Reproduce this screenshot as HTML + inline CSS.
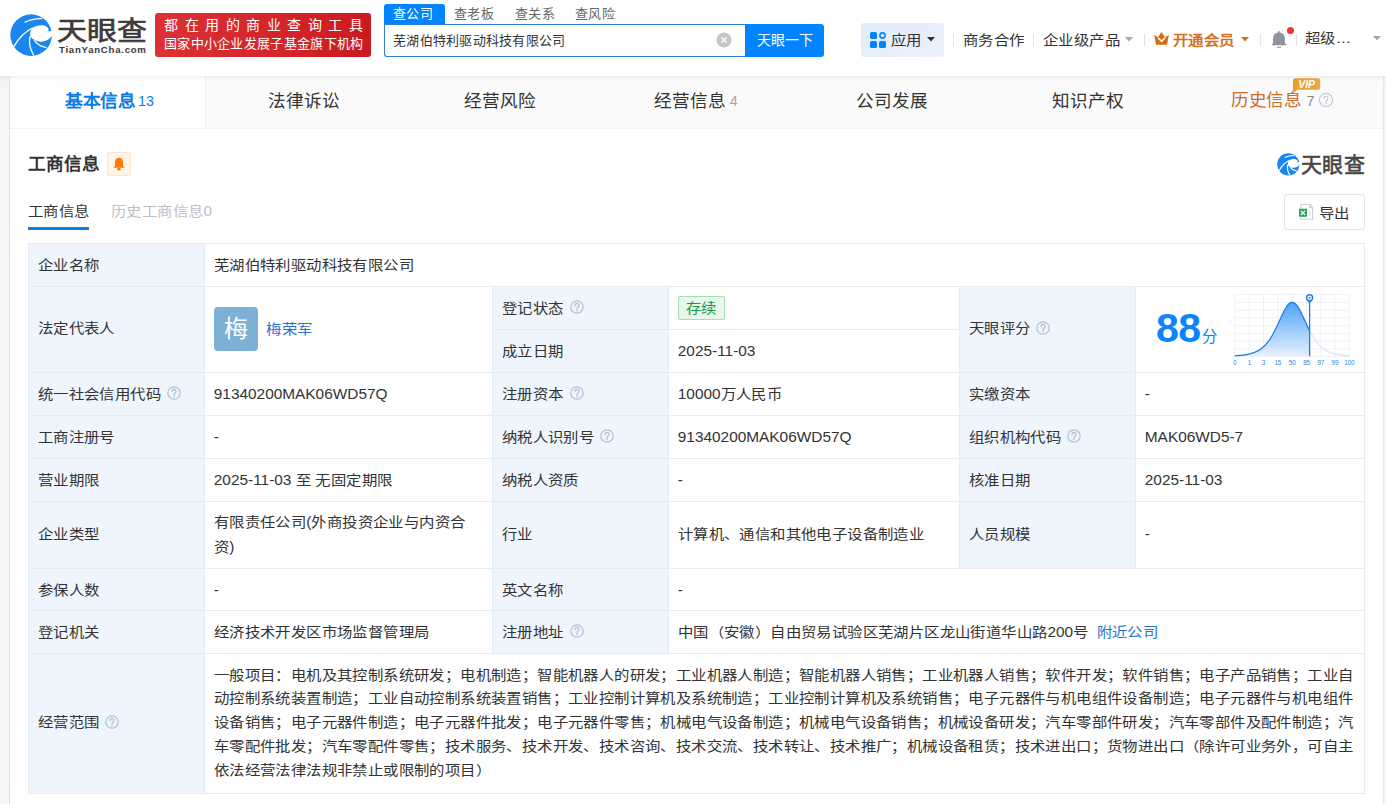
<!DOCTYPE html>
<html lang="zh-CN"><head><meta charset="utf-8">
<style>
*{margin:0;padding:0;box-sizing:border-box}
html,body{text-spacing-trim:space-all;width:1386px;height:804px;overflow:hidden;background:#f5f5f5;font-family:"Liberation Sans",sans-serif;color:#333}
.abs{position:absolute}
.hdr{position:absolute;left:0;top:0;width:1386px;height:76px;background:#fff;z-index:3;box-shadow:0 1px 5px rgba(0,0,0,.09)}
.card{position:absolute;left:9px;top:76px;width:1375px;height:728px;background:#fff;border-left:1px solid #e6e6e6;border-right:1px solid #e6e6e6}
.tabs{position:absolute;left:10px;top:76px;width:1373px;height:53px;background:#fafafa;border-bottom:1px solid #f3f3f3}
.tab{position:absolute;top:0;height:52px;width:196px;text-align:center;font-size:17.6px;line-height:50px;color:#333;white-space:nowrap}
.tab.act{background:#fff;color:#0a7de8;font-weight:bold;border-right:1px solid #efefef}
.tab sup{font-size:14.3px;font-weight:normal;vertical-align:1px;margin-left:3.5px;color:#888}
.tbl{position:absolute;background:#e4ebf3}
.cell{position:absolute;display:flex;align-items:center;padding:0 8.8px;font-size:15.4px;line-height:23.9px;color:#333;white-space:nowrap}
.cell .ml{white-space:nowrap;position:relative}
.cell .c{display:inline-block;transform:translateY(.8px) scaleY(.87)}
.c{letter-spacing:.4px}
.k{display:inline-block;transform:translateY(.8px) scaleY(.87)}
.qi{position:absolute;z-index:2}
.avatar{width:44px;height:44px;border-radius:4px;background:#7db0d7;color:#fff;font-size:24px;line-height:44px;text-align:center}
.lnk{color:#1f73cf;text-decoration:none}
.tag{display:inline-block;height:24px;line-height:22px;padding:0 7px;border:1px solid #a6dcb4;background:#e8f7ec;color:#1d9a45;border-radius:2px;font-size:15.4px}
</style></head><body>
<div class="hdr">
  <!-- logo -->
  <svg class="abs" style="left:8px;top:12px" width="46" height="46" viewBox="0 0 46 46">
    <circle cx="23.1" cy="23.1" r="20.8" fill="#1a86f0"/>
    <path d="M24.6 16 C28 13.2 36 12 39.6 15.4 C41.2 17 40.6 18.8 39.5 19.6 L45 18.8 L45 22 C42.5 27.5 37 30 31.5 29.6 C28 29.3 25 27.5 22.6 25 C21.4 22 22.4 18.2 24.6 16 Z" fill="#fff"/>
    <path d="M16.6 10.4 Q25 6.2 34.2 6.6" stroke="#fff" stroke-width="1.3" fill="none"/>
    <path d="M5.8 34.6 C10 27.5 16 20 24.8 15.9" stroke="#fff" stroke-width="1.3" fill="none"/>
    <path d="M22 24.2 C20.8 30 22.5 38 25.8 43.5" stroke="#fff" stroke-width="1.3" fill="none"/>
    <path d="M26.3 28.4 C28.5 31.6 33 34.6 38.6 35.6" stroke="#fff" stroke-width="1.2" fill="none"/>
  </svg>
  <div class="abs" style="left:57px;top:16px;font-size:26px;line-height:30px;font-weight:normal;-webkit-text-stroke:.7px #3e3a39;color:#3e3a39;transform:scaleX(1.15);transform-origin:0 0;white-space:nowrap">天眼查</div>
  <div class="abs" style="left:59px;top:44px;font-size:9.6px;line-height:12px;font-weight:bold;color:#3e3a39;letter-spacing:0.75px">TianYanCha.com</div>
  <!-- red banner -->
  <div class="abs" style="left:155px;top:13px;width:216px;height:44px;border-radius:3px;background:linear-gradient(90deg,#dd3136,#cb1b21)"></div>
  <div class="abs" style="left:164px;top:16px;width:199px;font-size:14px;line-height:18px;color:#fff;text-align:justify;text-align-last:justify;white-space:nowrap">都在用的商业查询工具</div>
  <div class="abs" style="left:164px;top:35px;font-size:13px;letter-spacing:.3px;line-height:18px;color:#fff;white-space:nowrap">国家中小企业发展子基金旗下机构</div>
  <!-- search -->
  <div class="abs" style="left:384px;top:4px;width:61px;height:21px;background:#0084ff;border-radius:3px 3px 0 0"></div>
  <div class="abs" style="left:393px;top:4px;font-size:13px;letter-spacing:.4px;line-height:20px;color:#fff">查公司</div>
  <div class="abs" style="left:454px;top:4px;font-size:13px;letter-spacing:.4px;line-height:20px;color:#666">查老板</div>
  <div class="abs" style="left:515px;top:4px;font-size:13px;letter-spacing:.4px;line-height:20px;color:#666">查关系</div>
  <div class="abs" style="left:575px;top:4px;font-size:13px;letter-spacing:.4px;line-height:20px;color:#666">查风险</div>
  <div class="abs" style="left:384px;top:24px;width:362px;height:33px;border:1px solid #2f7fd2;border-right:none;border-radius:0 0 0 3px;background:#fff"></div>
  <div class="abs" style="left:393px;top:30px;font-size:13px;letter-spacing:.25px;line-height:22px;color:#333">芜湖伯特利驱动科技有限公司</div>
  <svg class="abs" style="left:716px;top:32px" width="16" height="16" viewBox="0 0 16 16"><circle cx="8" cy="8" r="7.6" fill="#c4c6ca"/><path d="M5.3 5.3l5.4 5.4M10.7 5.3l-5.4 5.4" stroke="#fff" stroke-width="1.3"/></svg>
  <div class="abs" style="left:745px;top:24px;width:79px;height:33px;background:#0084ff;border-radius:0 3px 3px 0"></div>
  <div class="abs" style="left:757px;top:29px;font-size:14px;line-height:22px;color:#fff">天眼一下</div>
  <!-- right nav -->
  <div class="abs" style="left:861px;top:23px;width:83px;height:34px;background:linear-gradient(160deg,#e1ecfb 0%,#e6effb 55%,#ecf2fc 100%);border-radius:3px"></div>
  <svg class="abs" style="left:870px;top:32px" width="16" height="16" viewBox="0 0 16 16"><rect x="0" y="0" width="7" height="7" rx="1.5" fill="#0084ff"/><circle cx="12.5" cy="3.5" r="2.6" fill="none" stroke="#0084ff" stroke-width="1.6"/><rect x="0" y="9" width="7" height="7" rx="1.5" fill="#0084ff"/><rect x="9" y="9" width="7" height="7" rx="1.5" fill="#0084ff"/></svg>
  <div class="abs" style="left:891px;top:29px;font-size:15.4px;letter-spacing:.4px;line-height:22px;color:#333"><span class="k">应用</span></div>
  <svg class="abs" style="left:927px;top:37px" width="8" height="5" viewBox="0 0 8 5"><path d="M0 0h8L4 4.5z" fill="#333"/></svg>
  <div class="abs" style="left:953px;top:34px;width:1px;height:12px;background:#e3e3e3"></div>
  <div class="abs" style="left:963px;top:29px;font-size:15.4px;letter-spacing:.4px;line-height:22px;color:#333"><span class="k">商务合作</span></div>
  <div class="abs" style="left:1033px;top:34px;width:1px;height:12px;background:#e3e3e3"></div>
  <div class="abs" style="left:1043px;top:29px;font-size:15.4px;letter-spacing:.4px;line-height:22px;color:#333"><span class="k">企业级产品</span></div>
  <svg class="abs" style="left:1125px;top:37px" width="8" height="5" viewBox="0 0 8 5"><path d="M0 0h8L4 4.5z" fill="#a8a8a8"/></svg>
  <div class="abs" style="left:1144px;top:34px;width:1px;height:12px;background:#e3e3e3"></div>
  <svg class="abs" style="left:1154px;top:32px" width="15" height="13" viewBox="0 0 15 13"><path d="M0.2 3L4 5.2 7.4 0 11 5.2 14.9 3 13 12.7H2z" fill="#d96c12"/><path d="M4.1 5.8l3.5 3.5 3.6-3.5" stroke="#fff" stroke-width="1.6" fill="none"/></svg>
  <div class="abs" style="left:1173px;top:29px;font-size:15.4px;letter-spacing:.4px;line-height:22px;color:#d4701c;font-weight:bold"><span class="k">开通会员</span></div>
  <svg class="abs" style="left:1241px;top:37px" width="8" height="5" viewBox="0 0 8 5"><path d="M0 0h8L4 4.5z" fill="#d4701c"/></svg>
  <div class="abs" style="left:1260px;top:34px;width:1px;height:12px;background:#e3e3e3"></div>
  <svg class="abs" style="left:1271px;top:30px" width="16" height="19" viewBox="0 0 16 19"><rect x="7.2" y="1" width="1.6" height="2.5" rx=".8" fill="#8f949b"/><path d="M8 2.6c3.4 0 5.9 2.3 5.9 6V14H2.1V8.6C2.1 4.9 4.6 2.6 8 2.6z" fill="#8f949b"/><rect x="0.8" y="13.8" width="14.6" height="1.4" rx=".7" fill="#8f949b"/><rect x="6" y="16.8" width="4.2" height="1" fill="#8f949b"/></svg>
  <div class="abs" style="left:1287px;top:27px;width:7.4px;height:7.4px;border-radius:50%;background:#f5332e"></div>
  <div class="abs" style="left:1296px;top:34px;width:1px;height:12px;background:#e3e3e3"></div>
  <div class="abs" style="left:1305px;top:27px;font-size:15.4px;letter-spacing:.4px;line-height:22px;color:#333"><span class="k">超级</span>…</div>
  <svg class="abs" style="left:1373px;top:36px" width="8" height="5" viewBox="0 0 8 5"><path d="M0 0h8L4 4.5z" fill="#a8a8a8"/></svg>
</div>

<div class="card"></div>
<div class="tabs">
  <div class="tab act" style="left:0;padding-left:4px"><span style="letter-spacing:-.4px">基本信息</span><sup style="color:#0a7de8;margin-left:2.5px">13</sup></div>
  <div class="tab" style="left:196px">法律诉讼</div>
  <div class="tab" style="left:392px">经营风险</div>
  <div class="tab" style="left:588px">经营信息<sup style="color:#a6a6a6">4</sup></div>
  <div class="tab" style="left:784px">公司发展</div>
  <div class="tab" style="left:980px">知识产权</div>
  
</div>

<div class="abs" style="left:1231px;top:88px;font-size:17.6px;line-height:24px;color:#c96c2c;letter-spacing:-.4px;white-space:nowrap">历史信息</div>
  <div class="abs" style="left:1306.5px;top:91px;font-size:14.3px;line-height:20px;color:#888">7</div>
  <svg class="abs" style="left:1318px;top:92px" width="16" height="16" viewBox="0 0 16 16"><circle cx="8" cy="8" r="6.6" fill="none" stroke="#c5ccd4" stroke-width="1.2"/><path d="M6 6.3a2 2 0 1 1 3 1.7c-.6.4-1 .7-1 1.5v.5" fill="none" stroke="#c5ccd4" stroke-width="1.2" stroke-linecap="round"/><circle cx="8" cy="11.6" r=".75" fill="#c5ccd4"/></svg>
  <svg class="abs" style="left:1292px;top:78px" width="29" height="16" viewBox="0 0 29 16"><defs><linearGradient id="vg" x1="0" x2="1"><stop offset="0" stop-color="#ef9a28"/><stop offset="1" stop-color="#eba84c"/></linearGradient></defs><path d="M3 0.3h23a2.2 2.2 0 0 1 2.2 2.2v7a2.2 2.2 0 0 1-2.2 2.2H5.5L1.3 15 1 11.5V2.5A2.2 2.2 0 0 1 3 0.3z" fill="url(#vg)"/><text x="14.6" y="10" text-anchor="middle" font-family="Liberation Sans" font-weight="bold" font-style="italic" font-size="10.5" fill="#fff">VIP</text></svg>
<!-- section title -->
<div class="abs" style="left:28px;top:152px;font-size:17.6px;line-height:24px;font-weight:bold;color:#333">工商信息</div>
<div class="abs" style="left:107px;top:152px;width:24px;height:24px;border:1px solid #fde3cd;background:#fff4ea;border-radius:2px"></div>
<svg class="abs" style="left:113px;top:157px" width="12" height="14" viewBox="0 0 12 14"><path d="M6 0.8c2.6 0 4 2 4 4.6v3.4l1.6 1.9H.4L2 8.8V5.4C2 2.8 3.4.8 6 .8z" fill="#ff7b00"/><ellipse cx="6" cy="12.2" rx="1.8" ry="1.4" fill="#ff7b00"/></svg>
<div class="abs" style="left:28px;top:200px;font-size:15.4px;letter-spacing:.4px;line-height:22px;color:#333"><span class="k">工商信息</span></div>
<div class="abs" style="left:28px;top:227px;width:61px;height:3px;background:#0a7de8"></div>
<div class="abs" style="left:111px;top:200px;font-size:15.4px;letter-spacing:.4px;line-height:22px;color:#bbbfc6"><span class="k">历史工商信息</span>0</div>

<!-- right logo -->
<svg class="abs" style="left:1275.5px;top:151.5px" width="24.5" height="24.5" viewBox="0 0 46 46">
    <circle cx="23.1" cy="23.1" r="20.8" fill="#1a86f0"/>
    <path d="M24.6 16 C28 13.2 36 12 39.6 15.4 C41.2 17 40.6 18.8 39.5 19.6 L45 18.8 L45 22 C42.5 27.5 37 30 31.5 29.6 C28 29.3 25 27.5 22.6 25 C21.4 22 22.4 18.2 24.6 16 Z" fill="#fff"/>
    <path d="M16.6 10.4 Q25 6.2 34.2 6.6" stroke="#fff" stroke-width="2.2" fill="none"/>
    <path d="M5.8 34.6 C10 27.5 16 20 24.8 15.9" stroke="#fff" stroke-width="2.2" fill="none"/>
    <path d="M22 24.2 C20.8 30 22.5 38 25.8 43.5" stroke="#fff" stroke-width="2.2" fill="none"/>
    <path d="M26.3 28.4 C28.5 31.6 33 34.6 38.6 35.6" stroke="#fff" stroke-width="2" fill="none"/>
  </svg>
<div class="abs" style="left:1301px;top:152px;font-size:21px;line-height:26px;font-weight:normal;-webkit-text-stroke:.6px #474747;color:#474747;letter-spacing:.3px">天眼查</div>
<!-- export -->
<div class="abs" style="left:1284px;top:194px;width:81px;height:36px;border:1px solid #dfe3ea;border-radius:3px;background:#fff"></div>
<svg class="abs" style="left:1294px;top:200px" width="24" height="24" viewBox="0 0 24 24"><path d="M6.8 4.5h9l2.8 2.8v12h-11.8z" fill="#fff" stroke="#cdd0d5" stroke-width="1.1"/><path d="M15.8 4.5v3h2.8" fill="none" stroke="#cdd0d5" stroke-width="1.1"/><rect x="5" y="8.8" width="8" height="8" rx=".8" fill="#2a9d5c"/><path d="M6.8 10.6l4.4 4.4M11.2 10.6l-4.4 4.4" stroke="#fff" stroke-width="1.2"/><path d="M14.3 11.3h2.4M14.3 13.3h2.4M14.3 15.2h2.4" stroke="#d0d3d8" stroke-width=".9"/></svg>
<div class="abs" style="left:1319px;top:202px;font-size:15.4px;letter-spacing:.4px;line-height:22px;color:#333"><span class="k">导出</span></div>

<div class="tbl" style="left:28px;top:243px;width:1337px;height:551px"></div><div class="cell" style="left:29px;top:244px;width:175px;height:42px;background:#eef5fd;"><span><span class="c">企业名称</span></span></div><div class="cell" style="left:205px;top:244px;width:1159px;height:42px;background:#fff;"><span><span class="c">芜湖伯特利驱动科技有限公司</span></span></div><div class="cell" style="left:29px;top:287px;width:175px;height:85px;background:#eef5fd;padding-bottom:2.5px"><span><span class="c">法定代表人</span></span></div><div class="cell" style="left:205px;top:287px;width:287px;height:85px;background:#fff;padding-bottom:2px"><div class="avatar">梅</div><a class="lnk" style="margin-left:8.5px"><span class="c">梅荣军</span></a></div><div class="cell" style="left:493px;top:287px;width:175px;height:42px;background:#eef5fd;"><span><span class="c">登记状态</span></span></div><div class="cell" style="left:669px;top:287px;width:290px;height:42px;background:#fff;"><span class="tag"><span class="c">存续</span></span></div><div class="cell" style="left:493px;top:330px;width:175px;height:42px;background:#eef5fd;"><span><span class="c">成立日期</span></span></div><div class="cell" style="left:669px;top:330px;width:290px;height:42px;background:#fff;"><span>2025-11-03</span></div><div class="cell" style="left:960px;top:287px;width:175px;height:85px;background:#eef5fd;padding-bottom:2.5px"><span><span class="c">天眼评分</span></span></div><div class="cell" style="left:1136px;top:287px;width:228px;height:85px;background:#fff;padding-bottom:2.6px"></div><div class="cell" style="left:29px;top:373px;width:175px;height:42px;background:#eef5fd;"><span><span class="c">统一社会信用代码</span></span></div><div class="cell" style="left:205px;top:373px;width:287px;height:42px;background:#fff;"><span>91340200MAK06WD57Q</span></div><div class="cell" style="left:493px;top:373px;width:175px;height:42px;background:#eef5fd;"><span><span class="c">注册资本</span></span></div><div class="cell" style="left:669px;top:373px;width:290px;height:42px;background:#fff;"><span>10000<span class="c">万人民币</span></span></div><div class="cell" style="left:960px;top:373px;width:175px;height:42px;background:#eef5fd;"><span><span class="c">实缴资本</span></span></div><div class="cell" style="left:1136px;top:373px;width:228px;height:42px;background:#fff;"><span>-</span></div><div class="cell" style="left:29px;top:416px;width:175px;height:42px;background:#eef5fd;"><span><span class="c">工商注册号</span></span></div><div class="cell" style="left:205px;top:416px;width:287px;height:42px;background:#fff;"><span>-</span></div><div class="cell" style="left:493px;top:416px;width:175px;height:42px;background:#eef5fd;"><span><span class="c">纳税人识别号</span></span></div><div class="cell" style="left:669px;top:416px;width:290px;height:42px;background:#fff;"><span>91340200MAK06WD57Q</span></div><div class="cell" style="left:960px;top:416px;width:175px;height:42px;background:#eef5fd;"><span><span class="c">组织机构代码</span></span></div><div class="cell" style="left:1136px;top:416px;width:228px;height:42px;background:#fff;"><span>MAK06WD5-7</span></div><div class="cell" style="left:29px;top:459px;width:175px;height:42px;background:#eef5fd;"><span><span class="c">营业期限</span></span></div><div class="cell" style="left:205px;top:459px;width:287px;height:42px;background:#fff;"><span>2025-11-03 <span class="c">至</span> <span class="c">无固定期限</span></span></div><div class="cell" style="left:493px;top:459px;width:175px;height:42px;background:#eef5fd;"><span><span class="c">纳税人资质</span></span></div><div class="cell" style="left:669px;top:459px;width:290px;height:42px;background:#fff;"><span>-</span></div><div class="cell" style="left:960px;top:459px;width:175px;height:42px;background:#eef5fd;"><span><span class="c">核准日期</span></span></div><div class="cell" style="left:1136px;top:459px;width:228px;height:42px;background:#fff;"><span>2025-11-03</span></div><div class="cell" style="left:29px;top:502px;width:175px;height:66px;background:#eef5fd;padding-bottom:2.6px"><span><span class="c">企业类型</span></span></div><div class="cell" style="left:205px;top:502px;width:287px;height:66px;background:#fff;"><div class="ml" style="line-height:25px;top:-1px"><div><span class="c">有限责任公司</span>(<span class="c">外商投资企业与内资合</span></div><div><span class="c">资</span>)</div></div></div><div class="cell" style="left:493px;top:502px;width:175px;height:66px;background:#eef5fd;padding-bottom:2.6px"><span><span class="c">行业</span></span></div><div class="cell" style="left:669px;top:502px;width:290px;height:66px;background:#fff;padding-bottom:2.6px"><span><span class="c">计算机、通信和其他电子设备制造业</span></span></div><div class="cell" style="left:960px;top:502px;width:175px;height:66px;background:#eef5fd;padding-bottom:2.6px"><span><span class="c">人员规模</span></span></div><div class="cell" style="left:1136px;top:502px;width:228px;height:66px;background:#fff;padding-bottom:2.6px"><span>-</span></div><div class="cell" style="left:29px;top:569px;width:175px;height:41px;background:#eef5fd;"><span><span class="c">参保人数</span></span></div><div class="cell" style="left:205px;top:569px;width:287px;height:41px;background:#fff;"><span>-</span></div><div class="cell" style="left:493px;top:569px;width:175px;height:41px;background:#eef5fd;"><span><span class="c">英文名称</span></span></div><div class="cell" style="left:669px;top:569px;width:695px;height:41px;background:#fff;"><span>-</span></div><div class="cell" style="left:29px;top:611px;width:175px;height:42px;background:#eef5fd;"><span><span class="c">登记机关</span></span></div><div class="cell" style="left:205px;top:611px;width:287px;height:42px;background:#fff;"><span><span class="c">经济技术开发区市场监督管理局</span></span></div><div class="cell" style="left:493px;top:611px;width:175px;height:42px;background:#eef5fd;"><span><span class="c">注册地址</span></span></div><div class="cell" style="left:669px;top:611px;width:695px;height:42px;background:#fff;"><span><span class="c">中国（安徽）自由贸易试验区芜湖片区龙山街道华山路</span>200<span class="c">号</span></span><a class="lnk" style="margin-left:8px"><span class="c">附近公司</span></a></div><div class="cell" style="left:29px;top:654px;width:175px;height:139px;background:#eef5fd;padding-bottom:2.6px"><span><span class="c">经营范围</span></span></div><div class="cell" style="left:205px;top:654px;width:1159px;height:139px;background:#fff;"><div class="ml" style="line-height:23.75px;top:-1.5px"><div><span class="c">一般项目：电机及其控制系统研发；电机制造；智能机器人的研发；工业机器人制造；智能机器人销售；工业机器人销售；软件开发；软件销售；电子产品销售；工业自</span></div><div><span class="c">动控制系统装置制造；工业自动控制系统装置销售；工业控制计算机及系统制造；工业控制计算机及系统销售；电子元器件与机电组件设备制造；电子元器件与机电组件</span></div><div><span class="c">设备销售；电子元器件制造；电子元器件批发；电子元器件零售；机械电气设备制造；机械电气设备销售；机械设备研发；汽车零部件研发；汽车零部件及配件制造；汽</span></div><div><span class="c">车零配件批发；汽车零配件零售；技术服务、技术开发、技术咨询、技术交流、技术转让、技术推广；机械设备租赁；技术进出口；货物进出口（除许可业务外，可自主</span></div><div><span class="c">依法经营法律法规非禁止或限制的项目）</span></div></div></div><svg class="qi" style="left:569.5px;top:299.9px" width="14" height="14" viewBox="0 0 14 14"><circle cx="7" cy="7" r="6.2" fill="none" stroke="#afc1d3" stroke-width="1.2"/><path d="M5 5.5a2 2 0 1 1 3 1.7c-.55.35-.95.7-.95 1.35v.5" fill="none" stroke="#afc1d3" stroke-width="1.3" stroke-linecap="round"/><circle cx="7.05" cy="10.5" r=".8" fill="#afc1d3"/></svg><svg class="qi" style="left:167.0px;top:385.9px" width="14" height="14" viewBox="0 0 14 14"><circle cx="7" cy="7" r="6.2" fill="none" stroke="#afc1d3" stroke-width="1.2"/><path d="M5 5.5a2 2 0 1 1 3 1.7c-.55.35-.95.7-.95 1.35v.5" fill="none" stroke="#afc1d3" stroke-width="1.3" stroke-linecap="round"/><circle cx="7.05" cy="10.5" r=".8" fill="#afc1d3"/></svg><svg class="qi" style="left:569.5px;top:385.9px" width="14" height="14" viewBox="0 0 14 14"><circle cx="7" cy="7" r="6.2" fill="none" stroke="#afc1d3" stroke-width="1.2"/><path d="M5 5.5a2 2 0 1 1 3 1.7c-.55.35-.95.7-.95 1.35v.5" fill="none" stroke="#afc1d3" stroke-width="1.3" stroke-linecap="round"/><circle cx="7.05" cy="10.5" r=".8" fill="#afc1d3"/></svg><svg class="qi" style="left:600.0px;top:428.9px" width="14" height="14" viewBox="0 0 14 14"><circle cx="7" cy="7" r="6.2" fill="none" stroke="#afc1d3" stroke-width="1.2"/><path d="M5 5.5a2 2 0 1 1 3 1.7c-.55.35-.95.7-.95 1.35v.5" fill="none" stroke="#afc1d3" stroke-width="1.3" stroke-linecap="round"/><circle cx="7.05" cy="10.5" r=".8" fill="#afc1d3"/></svg><svg class="qi" style="left:1035.9px;top:320.8px" width="14" height="14" viewBox="0 0 14 14"><circle cx="7" cy="7" r="6.2" fill="none" stroke="#afc1d3" stroke-width="1.2"/><path d="M5 5.5a2 2 0 1 1 3 1.7c-.55.35-.95.7-.95 1.35v.5" fill="none" stroke="#afc1d3" stroke-width="1.3" stroke-linecap="round"/><circle cx="7.05" cy="10.5" r=".8" fill="#afc1d3"/></svg><svg class="qi" style="left:1067.0px;top:428.7px" width="14" height="14" viewBox="0 0 14 14"><circle cx="7" cy="7" r="6.2" fill="none" stroke="#afc1d3" stroke-width="1.2"/><path d="M5 5.5a2 2 0 1 1 3 1.7c-.55.35-.95.7-.95 1.35v.5" fill="none" stroke="#afc1d3" stroke-width="1.3" stroke-linecap="round"/><circle cx="7.05" cy="10.5" r=".8" fill="#afc1d3"/></svg><svg class="qi" style="left:569.5px;top:623.9px" width="14" height="14" viewBox="0 0 14 14"><circle cx="7" cy="7" r="6.2" fill="none" stroke="#afc1d3" stroke-width="1.2"/><path d="M5 5.5a2 2 0 1 1 3 1.7c-.55.35-.95.7-.95 1.35v.5" fill="none" stroke="#afc1d3" stroke-width="1.3" stroke-linecap="round"/><circle cx="7.05" cy="10.5" r=".8" fill="#afc1d3"/></svg><svg class="qi" style="left:105.0px;top:714.9px" width="14" height="14" viewBox="0 0 14 14"><circle cx="7" cy="7" r="6.2" fill="none" stroke="#afc1d3" stroke-width="1.2"/><path d="M5 5.5a2 2 0 1 1 3 1.7c-.55.35-.95.7-.95 1.35v.5" fill="none" stroke="#afc1d3" stroke-width="1.3" stroke-linecap="round"/><circle cx="7.05" cy="10.5" r=".8" fill="#afc1d3"/></svg>
<svg class="abs" style="left:1228px;top:288px" width="130" height="82" viewBox="0 0 130 82">
<defs><linearGradient id="cg" x1="0" y1="0" x2="0" y2="1"><stop offset="0" stop-color="#4ea3f8"/><stop offset="1" stop-color="#e6f1fd"/></linearGradient></defs>
<path d="M6.6 6.6V68.3" stroke="#edf2f8" stroke-width="1"/><path d="M21.4 6.6V68.3" stroke="#edf2f8" stroke-width="1"/><path d="M35.5 6.6V68.3" stroke="#edf2f8" stroke-width="1"/><path d="M49.8 6.6V68.3" stroke="#edf2f8" stroke-width="1"/><path d="M64.2 6.6V68.3" stroke="#edf2f8" stroke-width="1"/><path d="M78.5 6.6V68.3" stroke="#edf2f8" stroke-width="1"/><path d="M92.8 6.6V68.3" stroke="#edf2f8" stroke-width="1"/><path d="M106.9 6.6V68.3" stroke="#edf2f8" stroke-width="1"/><path d="M121.3 6.6V68.3" stroke="#edf2f8" stroke-width="1"/><path d="M6.6 6.6H121.3" stroke="#edf2f8" stroke-width="1"/><path d="M6.6 14.3H121.3" stroke="#edf2f8" stroke-width="1"/><path d="M6.6 22.2H121.3" stroke="#edf2f8" stroke-width="1"/><path d="M6.6 29.9H121.3" stroke="#edf2f8" stroke-width="1"/><path d="M6.6 37.7H121.3" stroke="#edf2f8" stroke-width="1"/><path d="M6.6 45.4H121.3" stroke="#edf2f8" stroke-width="1"/><path d="M6.6 53.0H121.3" stroke="#edf2f8" stroke-width="1"/><path d="M6.6 60.9H121.3" stroke="#edf2f8" stroke-width="1"/><path d="M6.6 68.3H121.3" stroke="#edf2f8" stroke-width="1"/>
<polygon points="6.6,67.8 7.1,67.8 7.6,67.7 8.1,67.7 8.6,67.7 9.1,67.6 9.6,67.6 10.1,67.6 10.6,67.5 11.1,67.5 11.6,67.5 12.1,67.4 12.6,67.4 13.1,67.3 13.6,67.3 14.1,67.2 14.6,67.1 15.1,67.1 15.6,67.0 16.1,67.0 16.6,66.9 17.1,66.8 17.6,66.7 18.1,66.6 18.6,66.6 19.1,66.5 19.6,66.4 20.1,66.3 20.6,66.1 21.1,66.0 21.6,65.9 22.1,65.8 22.6,65.7 23.1,65.5 23.6,65.4 24.1,65.2 24.6,65.1 25.1,64.9 25.6,64.7 26.1,64.5 26.6,64.3 27.1,64.1 27.6,63.9 28.1,63.7 28.6,63.4 29.1,63.2 29.6,62.9 30.1,62.7 30.6,62.4 31.1,62.1 31.6,61.7 32.1,61.4 32.6,61.1 33.1,60.7 33.6,60.3 34.1,59.9 34.6,59.5 35.1,59.1 35.6,58.6 36.1,58.2 36.6,57.7 37.1,57.2 37.6,56.6 38.1,56.1 38.6,55.5 39.1,54.9 39.6,54.3 40.1,53.6 40.6,53.0 41.1,52.3 41.6,51.5 42.1,50.8 42.6,50.0 43.1,49.2 43.6,48.4 44.1,47.6 44.6,46.7 45.1,45.8 45.6,44.9 46.1,43.9 46.6,43.0 47.1,42.0 47.6,41.0 48.1,40.0 48.6,39.0 49.1,37.9 49.6,36.8 50.1,35.8 50.6,34.7 51.1,33.6 51.6,32.5 52.1,31.4 52.6,30.3 53.1,29.2 53.6,28.1 54.1,27.1 54.6,26.0 55.1,25.0 55.6,24.0 56.1,23.0 56.6,22.1 57.1,21.2 57.6,20.3 58.1,19.5 58.6,18.7 59.1,18.0 59.6,17.3 60.1,16.7 60.6,16.2 61.1,15.7 61.6,15.3 62.1,15.0 62.6,14.7 63.1,14.5 63.6,14.4 64.1,14.3 64.6,14.3 65.1,14.4 65.6,14.6 66.1,14.8 66.6,15.2 67.1,15.5 67.6,16.0 68.1,16.5 68.6,17.1 69.1,17.7 69.6,18.4 70.1,19.2 70.6,20.0 71.1,20.8 71.6,21.7 72.1,22.7 72.6,23.6 73.1,24.6 73.6,25.6 74.1,26.7 74.6,27.7 75.1,28.8 75.6,29.9 76.1,31.0 76.6,32.1 77.1,33.2 77.6,34.2 78.1,35.3 78.6,36.4 79.1,37.5 79.6,38.5 80.1,39.6 80.6,40.6 81.1,41.6 81.6,42.6 81.6,42.6 81.6,68.3 6.6,68.3" fill="url(#cg)"/>
<polyline points="81.6,42.6 82.1,43.6 82.6,44.5 83.1,45.4 83.6,46.3 84.1,47.2 84.6,48.1 85.1,48.9 85.6,49.7 86.1,50.5 86.6,51.2 87.1,52.0 87.6,52.7 88.1,53.4 88.6,54.0 89.1,54.6 89.6,55.3 90.1,55.8 90.6,56.4 91.1,57.0 91.6,57.5 92.1,58.0 92.6,58.4 93.1,58.9 93.6,59.3 94.1,59.8 94.6,60.2 95.1,60.6 95.6,60.9 96.1,61.3 96.6,61.6 97.1,61.9 97.6,62.2 98.1,62.5 98.6,62.8 99.1,63.1 99.6,63.3 100.1,63.6 100.6,63.8 101.1,64.0 101.6,64.2 102.1,64.4 102.6,64.6 103.1,64.8 103.6,65.0 104.1,65.2 104.6,65.3 105.1,65.5 105.6,65.6 106.1,65.7 106.6,65.9 107.1,66.0 107.6,66.1 108.1,66.2 108.6,66.3 109.1,66.4 109.6,66.5 110.1,66.6 110.6,66.7 111.1,66.8 111.6,66.8 112.1,66.9 112.6,67.0 113.1,67.1 113.6,67.1 114.1,67.2 114.6,67.2 115.1,67.3 115.6,67.3 116.1,67.4 116.6,67.4 117.1,67.5 117.6,67.5 118.1,67.6 118.6,67.6 119.1,67.6 119.6,67.7 120.1,67.7 120.6,67.7 121.1,67.8" fill="none" stroke="#cfd6de" stroke-width="1"/>
<polyline points="6.6,67.8 7.1,67.8 7.6,67.7 8.1,67.7 8.6,67.7 9.1,67.6 9.6,67.6 10.1,67.6 10.6,67.5 11.1,67.5 11.6,67.5 12.1,67.4 12.6,67.4 13.1,67.3 13.6,67.3 14.1,67.2 14.6,67.1 15.1,67.1 15.6,67.0 16.1,67.0 16.6,66.9 17.1,66.8 17.6,66.7 18.1,66.6 18.6,66.6 19.1,66.5 19.6,66.4 20.1,66.3 20.6,66.1 21.1,66.0 21.6,65.9 22.1,65.8 22.6,65.7 23.1,65.5 23.6,65.4 24.1,65.2 24.6,65.1 25.1,64.9 25.6,64.7 26.1,64.5 26.6,64.3 27.1,64.1 27.6,63.9 28.1,63.7 28.6,63.4 29.1,63.2 29.6,62.9 30.1,62.7 30.6,62.4 31.1,62.1 31.6,61.7 32.1,61.4 32.6,61.1 33.1,60.7 33.6,60.3 34.1,59.9 34.6,59.5 35.1,59.1 35.6,58.6 36.1,58.2 36.6,57.7 37.1,57.2 37.6,56.6 38.1,56.1 38.6,55.5 39.1,54.9 39.6,54.3 40.1,53.6 40.6,53.0 41.1,52.3 41.6,51.5 42.1,50.8 42.6,50.0 43.1,49.2 43.6,48.4 44.1,47.6 44.6,46.7 45.1,45.8 45.6,44.9 46.1,43.9 46.6,43.0 47.1,42.0 47.6,41.0 48.1,40.0 48.6,39.0 49.1,37.9 49.6,36.8 50.1,35.8 50.6,34.7 51.1,33.6 51.6,32.5 52.1,31.4 52.6,30.3 53.1,29.2 53.6,28.1 54.1,27.1 54.6,26.0 55.1,25.0 55.6,24.0 56.1,23.0 56.6,22.1 57.1,21.2 57.6,20.3 58.1,19.5 58.6,18.7 59.1,18.0 59.6,17.3 60.1,16.7 60.6,16.2 61.1,15.7 61.6,15.3 62.1,15.0 62.6,14.7 63.1,14.5 63.6,14.4 64.1,14.3 64.6,14.3 65.1,14.4 65.6,14.6 66.1,14.8 66.6,15.2 67.1,15.5 67.6,16.0 68.1,16.5 68.6,17.1 69.1,17.7 69.6,18.4 70.1,19.2 70.6,20.0 71.1,20.8 71.6,21.7 72.1,22.7 72.6,23.6 73.1,24.6 73.6,25.6 74.1,26.7 74.6,27.7 75.1,28.8 75.6,29.9 76.1,31.0 76.6,32.1 77.1,33.2 77.6,34.2 78.1,35.3 78.6,36.4 79.1,37.5 79.6,38.5 80.1,39.6 80.6,40.6 81.1,41.6 81.6,42.6 81.6,42.6" fill="none" stroke="#1f7fe0" stroke-width="1.3"/>
<path d="M81.6 10V68.3" stroke="#1f7fe0" stroke-width="1.3"/>
<path d="M78.39999999999999 11.2L81.6 15.5 84.8 11.2z" fill="#1f7fe0"/>
<circle cx="81.6" cy="9.7" r="3.7" fill="#1f7fe0"/><circle cx="81.6" cy="9.7" r="2.3" fill="#fff"/><circle cx="81.6" cy="9.7" r="1" fill="#1f7fe0"/>
<g font-family="Liberation Sans" font-size="6.4" fill="#2f86dc" letter-spacing="-.2"><text x="6.6" y="76.6" text-anchor="middle">0</text><text x="21.4" y="76.6" text-anchor="middle">1</text><text x="35.5" y="76.6" text-anchor="middle">3</text><text x="49.8" y="76.6" text-anchor="middle">15</text><text x="64.2" y="76.6" text-anchor="middle">50</text><text x="78.5" y="76.6" text-anchor="middle">85</text><text x="92.8" y="76.6" text-anchor="middle">97</text><text x="106.9" y="76.6" text-anchor="middle">99</text><text x="121.3" y="76.6" text-anchor="middle">100</text></g>
</svg>
<div class="abs" style="left:1156px;top:305px;font-size:41px;line-height:46px;font-weight:bold;color:#0a84ff;letter-spacing:-.5px">88</div>
<div class="abs" style="left:1202px;top:327px;font-size:15.4px;line-height:20px;color:#0a84ff">分</div>

</body></html>
